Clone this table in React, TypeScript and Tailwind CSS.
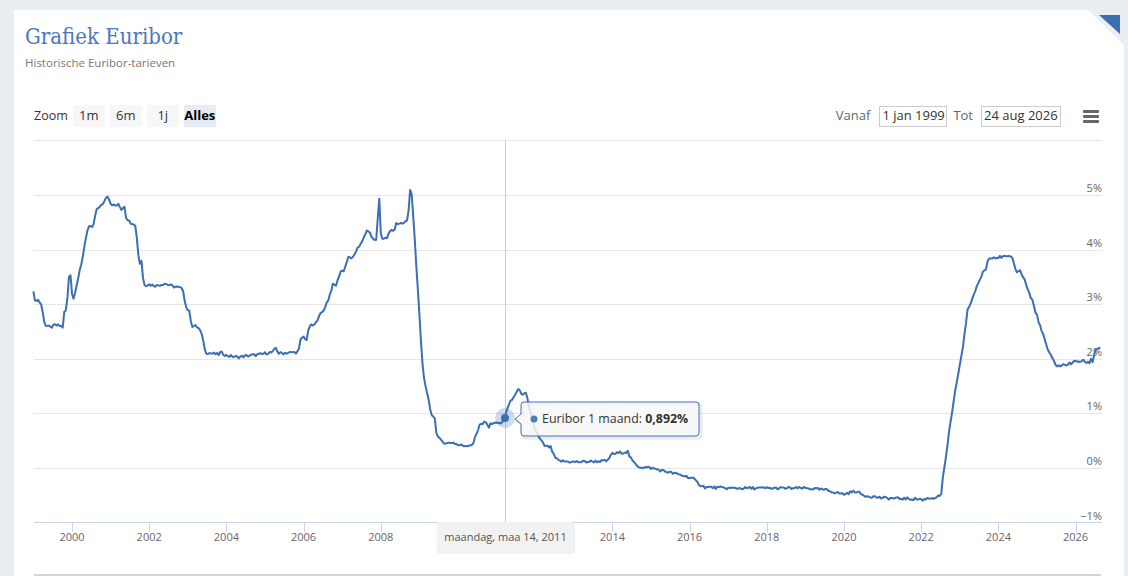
import React from "react";

// keypoints [year, percent] for Euribor 1 maand
const KEYS: [number, number][] = [
  [1999.0, 3.26], [1999.04, 3.05], [1999.1, 3.1], [1999.2, 3.0], [1999.3, 2.62], [1999.45, 2.57],
  [1999.55, 2.62], [1999.7, 2.6], [1999.76, 2.58], [1999.8, 2.85], [1999.86, 2.9], [1999.92, 3.5],
  [1999.96, 3.55], [2000.0, 3.2], [2000.04, 3.1], [2000.1, 3.3], [2000.25, 3.75], [2000.35, 4.2],
  [2000.42, 4.4], [2000.55, 4.42], [2000.62, 4.7], [2000.72, 4.8], [2000.8, 4.82], [2000.85, 4.92],
  [2000.93, 5.0], [2001.0, 4.85], [2001.1, 4.8], [2001.2, 4.82], [2001.3, 4.72], [2001.35, 4.85],
  [2001.4, 4.6], [2001.5, 4.5], [2001.6, 4.48], [2001.66, 4.4], [2001.72, 3.9], [2001.76, 3.75],
  [2001.8, 3.8], [2001.85, 3.4], [2001.9, 3.35], [2002.0, 3.36], [2002.2, 3.34], [2002.4, 3.38],
  [2002.6, 3.33], [2002.8, 3.3], [2002.88, 3.25], [2002.95, 2.95], [2003.05, 2.85], [2003.1, 2.6],
  [2003.2, 2.6], [2003.3, 2.55], [2003.4, 2.35], [2003.45, 2.12], [2003.6, 2.1], [2003.8, 2.08],
  [2003.85, 2.12], [2004.0, 2.06], [2004.3, 2.03], [2004.6, 2.06], [2004.9, 2.08], [2005.0, 2.1],
  [2005.2, 2.12], [2005.28, 2.2], [2005.35, 2.1], [2005.8, 2.12], [2005.87, 2.13], [2005.93, 2.38],
  [2006.0, 2.4], [2006.08, 2.35], [2006.15, 2.6], [2006.3, 2.62], [2006.4, 2.8], [2006.5, 2.85],
  [2006.58, 3.0], [2006.65, 3.1], [2006.75, 3.35], [2006.85, 3.35], [2006.95, 3.6], [2007.05, 3.62],
  [2007.15, 3.85], [2007.3, 3.85], [2007.4, 4.05], [2007.5, 4.1], [2007.6, 4.3], [2007.68, 4.35],
  [2007.75, 4.25], [2007.82, 4.17], [2007.9, 4.2], [2007.94, 4.9], [2007.97, 4.95], [2008.0, 4.3],
  [2008.05, 4.2], [2008.15, 4.2], [2008.25, 4.35], [2008.35, 4.35], [2008.4, 4.48], [2008.6, 4.48],
  [2008.7, 4.55], [2008.76, 5.1], [2008.79, 5.12], [2008.85, 4.5], [2008.92, 3.7], [2009.0, 2.8],
  [2009.08, 1.9], [2009.15, 1.5], [2009.25, 1.2], [2009.3, 1.0], [2009.36, 0.95], [2009.4, 0.9],
  [2009.45, 0.6], [2009.55, 0.5], [2009.7, 0.45], [2009.85, 0.47], [2009.93, 0.45], [2010.0, 0.42],
  [2010.2, 0.41], [2010.3, 0.42], [2010.4, 0.44], [2010.45, 0.6], [2010.5, 0.65], [2010.55, 0.8],
  [2010.65, 0.8], [2010.7, 0.85], [2010.8, 0.75], [2010.9, 0.85], [2010.95, 0.8], [2011.0, 0.85],
  [2011.1, 0.8], [2011.2, 0.89], [2011.25, 1.05], [2011.35, 1.2], [2011.45, 1.3], [2011.55, 1.45],
  [2011.6, 1.4], [2011.7, 1.35], [2011.78, 1.36], [2011.83, 1.1], [2011.9, 1.0], [2011.95, 0.8],
  [2012.0, 0.7], [2012.1, 0.55], [2012.25, 0.4], [2012.4, 0.38], [2012.5, 0.2], [2012.6, 0.13],
  [2013.0, 0.11], [2013.5, 0.12], [2013.9, 0.13], [2013.95, 0.25], [2014.2, 0.28], [2014.4, 0.3],
  [2014.45, 0.2], [2014.55, 0.1], [2014.7, 0.02], [2015.0, 0.0], [2015.3, -0.05], [2015.6, -0.1],
  [2015.9, -0.15], [2016.1, -0.2], [2016.25, -0.3], [2016.4, -0.35], [2017.0, -0.37], [2018.0, -0.37],
  [2019.0, -0.37], [2019.5, -0.4], [2019.8, -0.45], [2020.0, -0.48], [2020.3, -0.42], [2020.5, -0.5],
  [2021.0, -0.55], [2021.5, -0.56], [2022.0, -0.57], [2022.05, -0.6], [2022.1, -0.56], [2022.3, -0.55],
  [2022.45, -0.52], [2022.52, -0.48], [2022.56, -0.2], [2022.6, 0.0], [2022.66, 0.3], [2022.72, 0.65],
  [2022.8, 1.0], [2022.88, 1.4], [2022.95, 1.7], [2023.0, 1.88], [2023.1, 2.3], [2023.2, 2.9],
  [2023.3, 3.05], [2023.4, 3.25], [2023.5, 3.4], [2023.6, 3.6], [2023.7, 3.65], [2023.73, 3.86],
  [2024.0, 3.86], [2024.2, 3.87], [2024.38, 3.84], [2024.45, 3.6], [2024.55, 3.62], [2024.65, 3.5],
  [2024.75, 3.3], [2024.85, 3.1], [2024.9, 3.05], [2024.95, 2.85], [2025.0, 2.8], [2025.1, 2.55],
  [2025.2, 2.35], [2025.3, 2.12], [2025.4, 2.0], [2025.5, 1.88], [2025.6, 1.87], [2025.8, 1.9],
  [2026.0, 1.95], [2026.2, 1.96], [2026.35, 1.92], [2026.4, 2.0], [2026.45, 1.93], [2026.5, 2.18],
  [2026.65, 2.2],
];

const px = (year: number) => 72 + (year - 2000) * 38.6;
const py = (v: number) => 468 - 54.6 * v;

const valueAt = (t: number) => {
  for (let i = 1; i < KEYS.length; i++) {
    if (t <= KEYS[i][0]) {
      const [t0, v0] = KEYS[i - 1];
      const [t1, v1] = KEYS[i];
      return v0 + ((t - t0) / (t1 - t0)) * (v1 - v0);
    }
  }
  return KEYS[KEYS.length - 1][1];
};

const buildPath = () => {
  const pts: string[] = [];
  let i = 0;
  for (let t = 1999.0; t <= 2026.65; t += 0.04) {
    const r = Math.sin(i * 12.9898) * 43758.5453;
    const noise = (r - Math.floor(r) - 0.5) * 0.05;
    pts.push(`${px(t).toFixed(1)},${py(valueAt(t) + noise).toFixed(1)}`);
    i++;
  }
  return "M" + pts.join("L");
};

const SERIES = buildPath();
const font = '"Open Sans", "Noto Sans", sans-serif';
// 2010 and 2012 sit under the date label
const years = [2000, 2002, 2004, 2006, 2008, 2014, 2016, 2018, 2020, 2022, 2024, 2026];
const ticks = [2000, 2002, 2004, 2006, 2008, 2010, 2012, 2014, 2016, 2018, 2020, 2022, 2024, 2026];
const pcts = [5, 4, 3, 2, 1, 0, -1];

const Chart = () => (
  <svg width={1110} height={446} className="block" style={{ fontFamily: font }}>
    <g transform="translate(-14,-130)">
      {[6, 5, 4, 3, 2, 1, 0].map((v) => (
        <line key={v} x1={34} x2={1102} y1={Math.round(py(v)) + 0.5} y2={Math.round(py(v)) + 0.5} stroke="#e6e6e6" />
      ))}
      <line x1={34} x2={1102} y1={522.5} y2={522.5} stroke="#ccd6eb" />
      {ticks.map((y) => (
        <line key={y} x1={Math.round(px(y)) + 0.5} x2={Math.round(px(y)) + 0.5} y1={522} y2={532} stroke="#ccd6eb" />
      ))}
      {years.map((y) => (
        <text key={y} x={px(y)} y={541} textAnchor="middle" fontSize={11} fill="#666">{y}</text>
      ))}
      {pcts.map((v) => (
        <text key={v} x={1102} y={Math.round(py(v)) - 3} textAnchor="end" fontSize={11} fill="#666">
          {v < 0 ? `−${-v}%` : `${v}%`}
        </text>
      ))}
      <line x1={505.5} x2={505.5} y1={140} y2={522} stroke="#cccccc" />
      <path d={SERIES} fill="none" stroke="#3c6eb4" strokeWidth={2} strokeLinejoin="round" />
      <circle cx={505} cy={418} r={10} fill="#3c6eb4" fillOpacity={0.25} />
      <circle cx={505} cy={418} r={4} fill="#3c6eb4" />

      {/* tooltip */}
      <path
        d="M525 403H697Q700 403 700 406V434Q700 437 697 437H525Q522 437 522 434V425L516 420L522 415V406Q522 403 525 403Z"
        fill="none" stroke="#000" strokeOpacity={0.08} strokeWidth={3} transform="translate(1,1)"
      />
      <path
        d="M524 402H696Q699 402 699 405V433Q699 436 696 436H524Q521 436 521 433V424L515 419L521 414V405Q521 402 524 402Z"
        fill="#f7f7f7" fillOpacity={0.85} stroke="#3c6eb4"
      />
      <circle cx={534} cy={419} r={3.5} fill="#4a7dc4" />
      <text x={542} y={423} fontSize={12.4} fill="#333">
        Euribor 1 maand: <tspan fontWeight={700}>0,892%</tspan>
      </text>

      {/* date label */}
      <rect x={438} y={523} width={137} height={31} rx={2} fill="#000" fillOpacity={0.06} />
      <rect x={437} y={522} width={137} height={31} rx={2} fill="#f2f2f2" />
      <text x={505.5} y={541} textAnchor="middle" fontSize={11} fill="#555">maandag, maa 14, 2011</text>

      <rect x={34} y={574} width={1067} height={2} fill="#d0d5dc" />
    </g>
  </svg>
);

export default function App() {
  const btn = "w-[32px] h-[22px] flex items-center justify-center text-[13px]";
  return (
    <div className="h-[576px] overflow-hidden bg-[#e9eef3] pt-[10px] pl-[14px]" style={{ fontFamily: font }}>
      <div className="relative w-[1110px] h-[566px] bg-white overflow-hidden">
        <svg className="absolute right-0 top-0" width={37} height={36}>
          <polygon points="1,0 37,0 37,35" fill="#e9eef3" />
          <polygon points="12,5 33,5 33,24" fill="#3c6eb4" />
        </svg>

        <div className="pl-[11px] pt-[14px]">
          <h1
            className="text-[22px] leading-[26px] text-[#4a77be]"
            style={{ fontFamily: '"DejaVu Serif", serif', fontStretch: "condensed" }}
          >
            Grafiek Euribor
          </h1>
          <p className="mt-[5px] text-[11.5px] leading-[16px] text-[#777]">Historische Euribor-tarieven</p>
        </div>

        <div className="mt-[34px] flex h-[22px] items-center justify-between pl-[20px] pr-[25px] text-[#333]">
          <div className="flex items-center gap-[5px]">
            <span className="text-[12.5px]">Zoom</span>
            <div className={`${btn} bg-[#f7f7f7]`}>1m</div>
            <div className={`${btn} bg-[#f7f7f7]`}>6m</div>
            <div className={`${btn} bg-[#f7f7f7]`}>1j</div>
            <div className={`${btn} bg-[#e6ebf5] font-bold text-black`}>Alles</div>
          </div>
          <div className="flex items-center text-[13px]">
            <span className="text-[#666]">Vanaf</span>
            <div className="ml-[9px] flex h-[21px] w-[68px] items-center border border-[#cccccc] pl-[2px]">1 jan 1999</div>
            <span className="ml-[6px] text-[#666]">Tot</span>
            <div className="ml-[8px] flex h-[21px] w-[80px] items-center border border-[#cccccc] pl-[2px]">24 aug 2026</div>
            <div className="ml-[22px] flex w-[16px] flex-col gap-[2px]">
              <span className="h-[3px] rounded-[1px] bg-[#666]" />
              <span className="h-[3px] rounded-[1px] bg-[#666]" />
              <span className="h-[3px] rounded-[1px] bg-[#666]" />
            </div>
          </div>
        </div>

        <div className="mt-[3px]">
          <Chart />
        </div>
      </div>
    </div>
  );
}
